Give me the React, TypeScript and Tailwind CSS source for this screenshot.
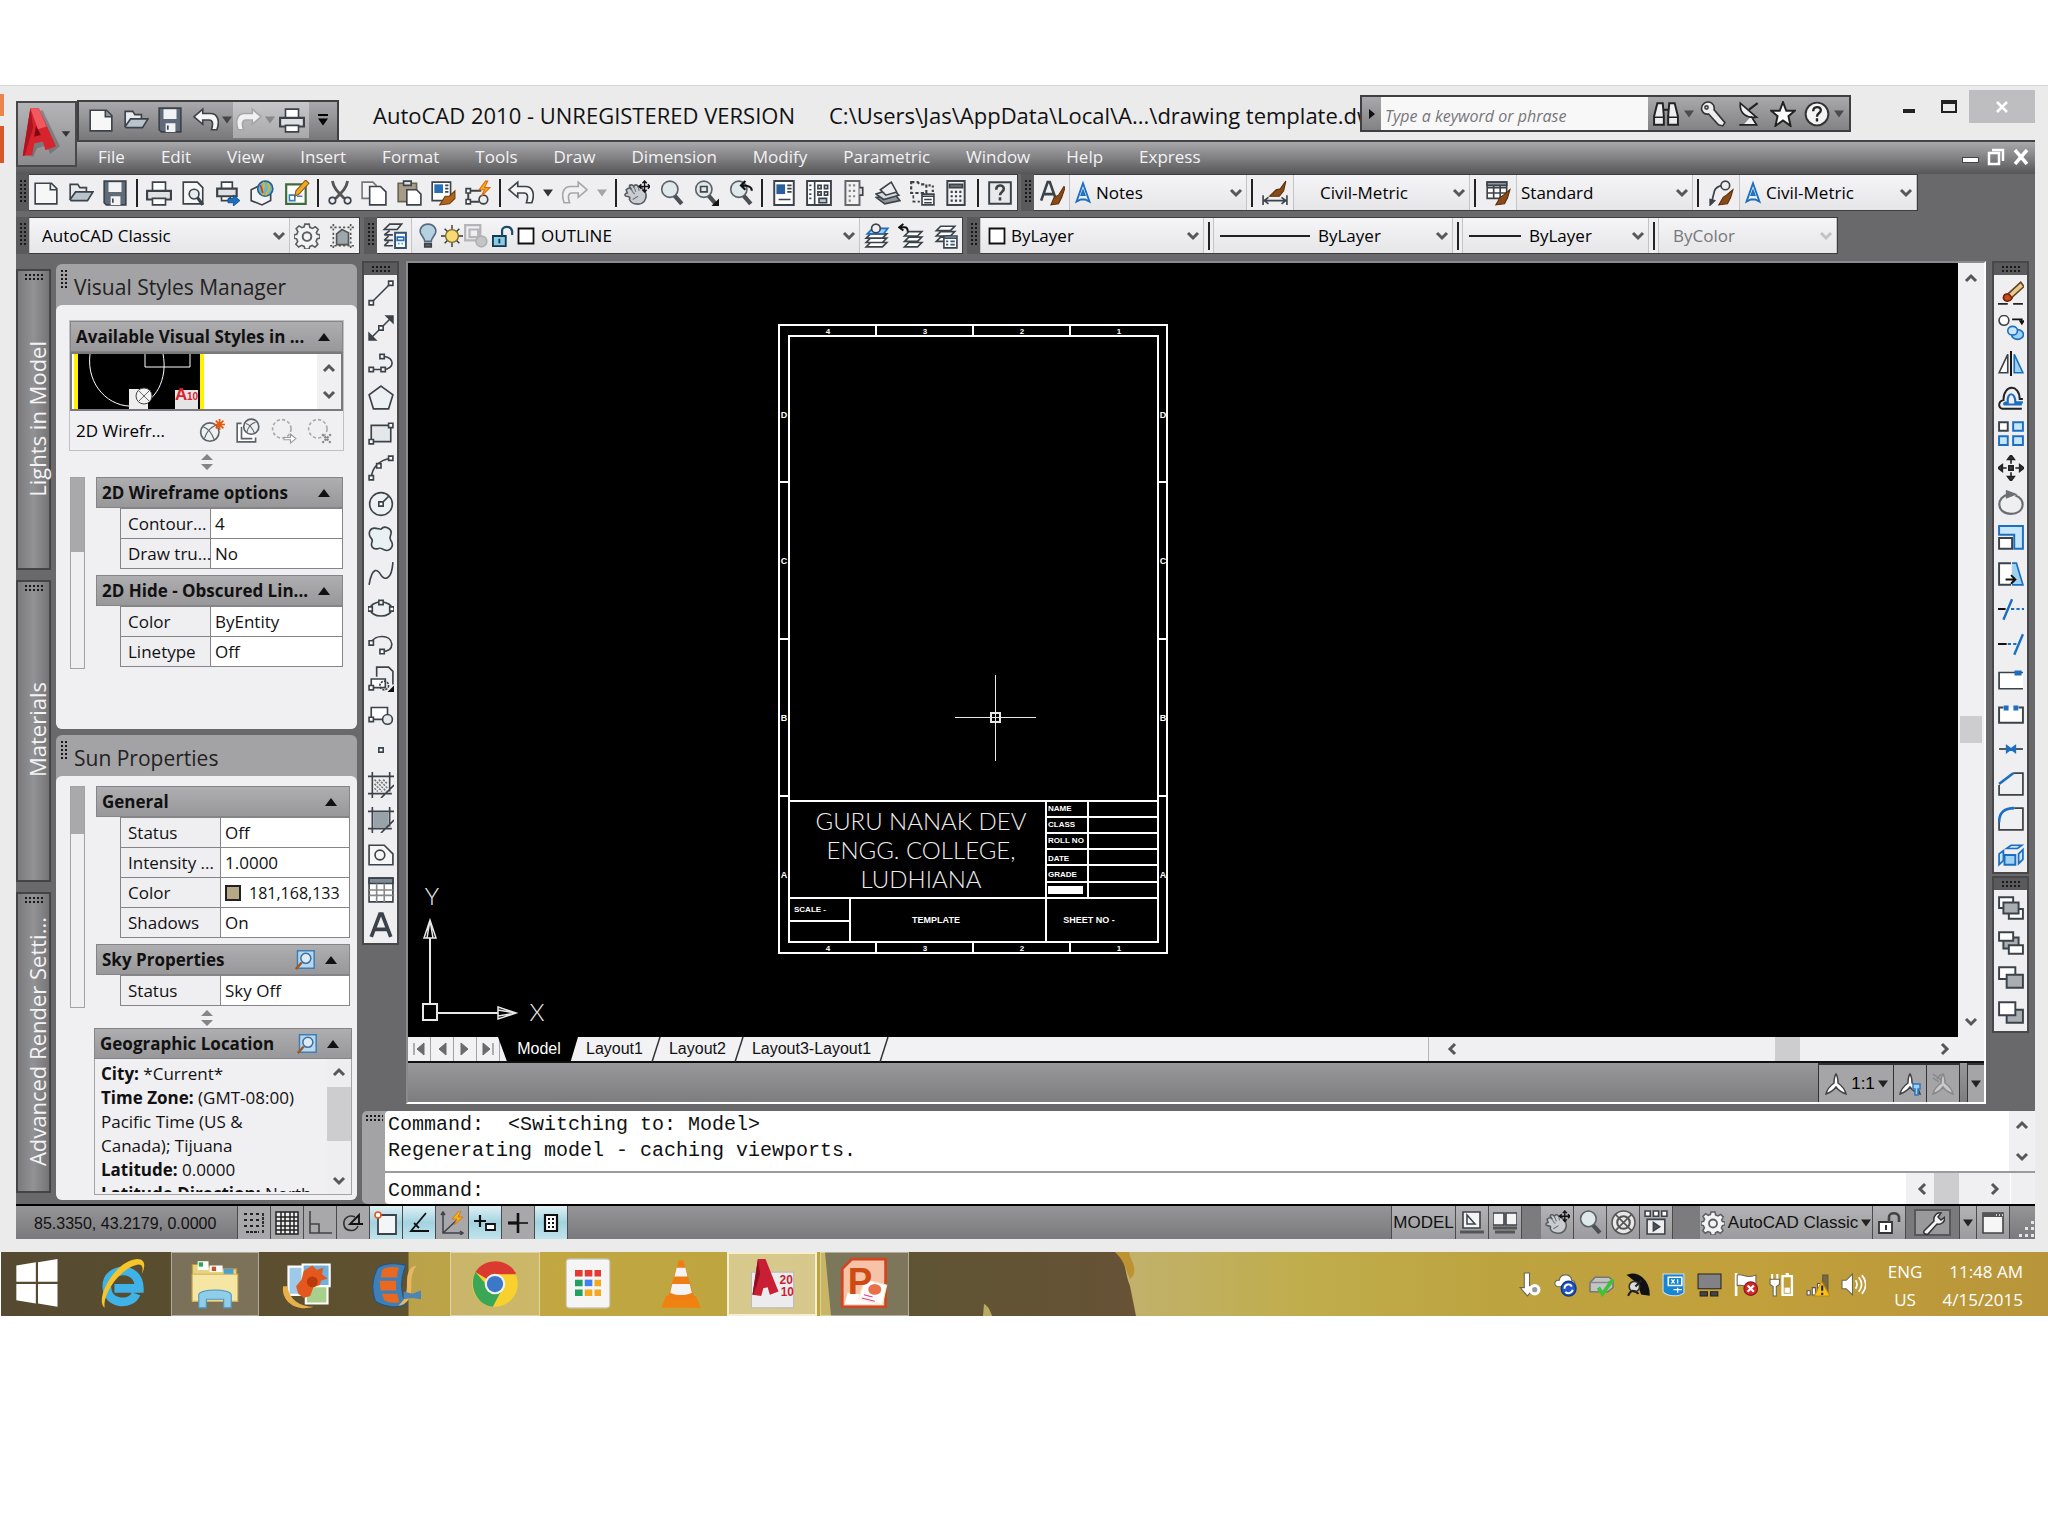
import React from "react";
import type { ReactNode } from "react";

const K = "#3c4249";
const B = "#1c6fc0";

function Svg({ children, className = "size-[26px]" }: { children: ReactNode; className?: string }) {
  return (
    <svg viewBox="0 0 24 24" className={"shrink-0 " + className} fill="none" stroke={K} strokeWidth="1.5" aria-hidden="true">
      {children}
    </svg>
  );
}

const handShape = (
  <>
    <path d="M2 9c2-2 4-2 5 0L5 6c0-2 3-2 4 0 1-2 3-2 4 0 2-1 3 0 4 2 3 2 4 6 3 9-1 4-5 6-9 5-3 0-5-2-6-4 1-2 0-3-3-3-2-1-1-3 1-3l-1-3Z" fill="#c9cdd1" stroke="#555c63" />
    <path d="M7 9c1 2 1 3 3 4M9 6l2 5M13 6l1 4M8 18l5-3" stroke="#6b7279" strokeWidth="1" />
    <path d="M19 1v10M14 6h10M17 3l2-2 2 2M17 9l2 2 2-2M16 4l-2 2 2 2M22 4l2 2-2 2" stroke="#111" strokeWidth="1.3" />
  </>
);
const magnifier = (
  <>
    <path d="m14 14 7 8" stroke="#4c4f53" strokeWidth="4" />
    <circle cx="10" cy="8.5" r="7.500" fill="#dfe9ec" stroke="#5b6268" />
  </>
);
const sheets = <path d="M8 3h13l-4 4H4ZM8 8h13l-4 4H4ZM8 13h13l-4 4H4Z" fill="#fff" />;
const globeBall = (
  <>
    <circle cx="10" cy="13" r="8.5" fill="#eef0f2" stroke="#5b6268" />
    <path d="M4 8c5 2 8 6 10 12M15 7C10 9 7 13 5 19" stroke="#5b6268" strokeWidth="1" />
  </>
);
const personShape = "M12 2c-2 3-2 6-2 9-4 3-7 6-8 11 3-1 7-3 10-7 3 4 7 6 10 7-1-5-4-8-8-11 0-3 0-6-2-9Z";

const icons: Record<string, ReactNode> = {
  new: <path d="M2 3h15l5 5v14H2ZM16 3v6h6" fill="#f7f7f8" />,
  open: <><path d="M2 18V4h7l2 3h6v4" fill="#e9eaec" /><path d="M2 18 7 11h16l-5 8H3Z" fill="#b9c3cc" /></>,
  save: <><path d="M2 1h20v22H4l-2-2Z" fill="#5f6b79" /><path d="M6 2h12v9H6ZM8 15h9v8H8Z" fill="#f2f3f4" stroke="none" /><path d="M10 17v4" /></>,
  print: <><path d="M6 10V2h12v8" fill="#fff" /><path d="M1 10h22v8H1Z" fill="#dfe1e3" strokeWidth="2" /><path d="M6 17h12v6H6Z" fill="#fff" /></>,
  preview: <><path d="M3 2h13l5 5v15H3Z" fill="#f7f7f8" /><circle cx="13" cy="13" r="4.5" fill="#e6edf0" /><path d="m16 16 5 7" strokeWidth="3" /></>,
  publish: <><path d="M6 8V2h10v6M6 14v5h8v-5" fill="#fff" /><path d="M2 8h18v7H2Z" fill="#dfe1e3" strokeWidth="2" /><path d="M12 17h5v-3l6 5-6 5v-3h-5Z" fill={B} stroke="#0c4c90" strokeWidth=".8" /></>,
  globe: <><path d="m2 9 8-4 10 5v9l-8 4-10-4Z" fill="#f3f4f5" /><circle cx="15" cy="8" r="7" fill="#5fb8dd" stroke="#27618c" /><path d="M13 2c3 3-2 6 0 12M17 3c3 4 2 7-2 11" stroke="#e3b02c" strokeWidth="2" /><path d="M10 5c3 2 1 5 3 7" stroke="#c0392b" /></>,
  markup: <><path d="M2 4h18v18H2Z" fill="#fff" stroke="#3f6a3c" strokeWidth="2" /><path d="M5 14h5v5H5ZM12 15h5" stroke="#3a7fb8" /><path d="m10 15 1-5L20 0l3 3-9 10Z" fill="#f0a928" stroke="#8f5712" strokeWidth="1" /></>,
  cut: <><path d="M5 1c1 6 4 9 11 16M19 1c-1 6-4 9-11 16" stroke="#555" strokeWidth="2.6" /><circle cx="5" cy="19" r="3" /><circle cx="19" cy="19" r="3" /></>,
  copy: <><path d="M1 2h10l3 3v12H1Z" fill="#f4f4f5" stroke="#777" /><path d="M8 6h10l5 5v12H8Z" fill="#fff" /></>,
  paste: <><path d="M2 3h17v17H2Z" fill="#a59b86" stroke="#6b6452" /><path d="M7 1h7v4H7Z" fill="#ddd" /><path d="M10 9h9l4 4v10H10Z" fill="#fff" /></>,
  match: <><path d="M2 2h17v17H2Z" fill="#fff" /><path d="M4 4h8v8H4Z" fill="#2a6fb5" stroke="none" /><path d="M14 5h3M14 8h3M14 11h3" /><path d="m23 10-5 5-4 0-5 8 9-1 5-5Z" fill="#b3641d" stroke="#6b390b" strokeWidth="1" /></>,
  block: <><path d="M3 10h12M3 20h10M3 10v10" strokeWidth="1.8" /><circle cx="17" cy="18" r="4" fill="#eee" /><path d="M1 8h4v4H1ZM1 18h4v4H1Z" fill="#fff" /><path d="m19 1-6 8h5l-3 6 8-8h-5l3-6Z" fill="#f6b21b" stroke="#dd6a10" strokeWidth="1" /></>,
  undo: <path d="M9 2 1 9l8 7v-4h6c3 0 4 3 2 9h5c3-8 1-15-6-15H9Z" fill="#f6f6f7" />,
  redo: <path d="m15 2 8 7-8 7v-4H9c-3 0-4 3-2 9H2C-1 13 1 6 8 6h7Z" fill="#f1f1f2" stroke="#a6a6a8" />,
  pan: handShape,
  zoom: magnifier,
  zoomwin: <>{magnifier}<path d="M7 6h6v5H7Z" stroke="#444" /><path d="m24 24-7 0 7-7Z" fill="#111" stroke="none" /></>,
  zoomprev: <>{magnifier}<path d="M22 10c0-4-3-5-9-5M16 1l-4 4 4 4" stroke="#111" strokeWidth="2" /></>,
  props: <><path d="M3 1h18v22H3Z" fill="#fff" strokeWidth="1.8" /><path d="M5 4h8v9H5Z" fill="#2a5f9e" stroke="none" /><path d="M15 5h4M15 8h4M15 11h4M7 18h11" /></>,
  center: <><path d="M1 1h22v22H1Z" fill="#fff" strokeWidth="1.8" /><path d="M8 1v22M3 5h2M3 9h2M3 13h2M3 17h2M11 5h3v3h-3ZM17 5h3v3h-3ZM11 11h3v3h-3ZM17 11h3v3h-3Z" /><path d="M12 17h7v4h-7Z" fill="#b9c7d3" /></>,
  palettes: <><path d="M5 1h13v22H5Z" fill="#f2f2f3" stroke="#666" strokeWidth="1.8" /><path d="M8 5h2M12 5h2M8 10h2M12 10h2M8 15h2M12 15h2M8 19h2" strokeWidth="2" stroke="#888" /><path d="M18 7h3v7h-3" fill="#ddd" /></>,
  sheetset: <><path d="m1 16 8 6 14-3-4-5Z" fill="#8d959c" /><path d="m1 13 7 5 14-4-6-6Z" fill="#d7dade" /><path d="M5 9 15 2l5 9-10 3Z" fill="#eee" /></>,
  markupset: <><path d="M2 2h6l2 2h6v8H2Z" strokeDasharray="3 2" strokeWidth="2" /><path d="M4 14v6h6" strokeDasharray="3 2" /><path d="M18 5h4v8" strokeDasharray="2 2" strokeWidth="2" /><path d="M12 13h11v10H12Z" fill="#fff" /><path d="M12 15h11M14 18h7M14 21h7" /></>,
  calc: <><path d="M4 1h16v22H4Z" fill="#f2f2f3" strokeWidth="1.8" /><path d="M6 4h12v3H6Z" fill="#777" /><path d="M7 11h2M11 11h2M15 11h2M7 15h2M11 15h2M15 15h2M7 19h2M11 19h2M15 19h2" strokeWidth="2" /></>,
  help: <><path d="M2 2h20v20H2Z" fill="#e8e9eb" strokeWidth="1.8" /><path d="M8.500 9c0-5 7-5 7-1 0 3-3.500 3-3.500 6M12 16v3" strokeWidth="2.400" /></>,
  textstyle: <><path d="M2 19 8 2h2l6 17M4 13h9" strokeWidth="2.400" /><path d="m23 6-5 8-4 2-3 7 7-1 3-6 3-9Z" fill="#8a4b18" stroke="#5c2e08" strokeWidth="1" /></>,
  dimstyle: <><path d="M1 14v9M23 14v9M2 19h20M6 16l-4 3 4 3M18 16l4 3-4 3" /><path d="m22 1-5 7-4 1-6 6 9 0 4-5Z" fill="#8a4b18" stroke="#5c2e08" strokeWidth="1" /></>,
  tablestyle: <><path d="M2 2h18v15H2ZM2 7h18M2 12h18M8 5v12M14 5v12" fill="#fff" /><path d="M2 2h18v3H2Z" fill="#8a97a3" /><path d="m23 9-6 5-3 2-4 7 8-1 3-6Z" fill="#8a4b18" stroke="#5c2e08" strokeWidth="1" /></>,
  mleader: <><path d="M3 22 6 10c1-3 3-4 7-5" strokeWidth="1.600" /><circle cx="16" cy="5" r="4" fill="#eee" /><path d="m2 23 0-5 4 1Z" fill={K} /><path d="m23 9-6 5-3 2-4 7 8-1 3-6Z" fill="#8a4b18" stroke="#5c2e08" strokeWidth="1" /></>,
  compass: <path d="m12 3 6 17-4-2h-4l-4 2ZM12 10l1.500 4h-3Z" stroke={B} strokeWidth="1.700" fill="#e8f1fa" />,
  gear: <><path d="M10 1h4l.6 3 2.400 1 2.700-1.600 2.600 2.600L20.600 9l.8 1.500 2.600.5v3l-2.600.6-1 2.400 1.600 2.700-2.600 2.600-2.700-1.600-2.200 1L14 24h-4l-.6-2.400-2.400-1-2.700 1.600-2.600-2.600L3.400 17l-1-2.400L0 14v-3l2.600-.6 1-2.400L2 5.300 4.600 2.700l2.700 1.600 2.100-.8Z" fill="#f4f4f5" stroke="#5a5f65" /><circle cx="12" cy="12.500" r="4" stroke="#5a5f65" strokeWidth="1.800" /></>,
  wspace: <><path d="M1 4h22M1 21h22M4 1v23M20 1v23" stroke="#555" strokeDasharray="2 2" /><path d="M7 20V10l5-4 6 3v11Z" fill="#9fa7ae" stroke="#555" /></>,
  layerprops: <><path d="M8 1h11l-4 5H3ZM3 11h8M8 7l-5 4M3 16h8M7 12l-4 4M3 21h8M7 17l-4 4" /><path d="M13 9h10v14H13Z" fill="#fff" stroke="#33536f" strokeWidth="1.800" /><path d="M15 13h6v3h-6ZM16 19h1M19 19h1" stroke={B} /></>,
  bulb: <><path d="M12 1c-5 0-8 4-7 8 1 3 4 5 4 8h6c0-3 3-5 4-8 1-4-2-8-7-8Z" fill="#b5d0e2" stroke="#54687a" /><path d="M9 19h6v3H9Z" fill="#666" /></>,
  sun: <><path d="M12 0v24M0 12h24M4 4l16 16M20 4 4 20" stroke="#333" /><circle cx="12" cy="12" r="7" fill="#f8da73" stroke="#7d6a2c" /></>,
  freeze: <><path d="M2 2h14v14H2ZM6 6h8v7H6Z" stroke="#b5b5b8" strokeWidth="2" /><circle cx="17" cy="17" r="5" fill="#c4c4c7" stroke="#b0b0b3" /></>,
  lock: <><path d="M1 12h14v11H1Z" fill="#8bcbe6" stroke="#12394f" strokeWidth="2" /><path d="M11 12V6c0-5 10-6 11 1v4" stroke="#1b4d68" strokeWidth="2.400" /><path d="M8 15v5" stroke="#12394f" strokeWidth="2" /></>,
  swatch: <path d="M2 2h20v20H2Z" fill="#fff" stroke="#111" strokeWidth="2.400" />,
  makecur: <><path d="M6 10h15l-4 4H2ZM6 14h15l-4 4H2ZM6 18h15l-4 4H2Z" fill="#fff" /><path d="M8 5h14l-4 5H3Z" fill="#9fd0ee" stroke={B} /><circle cx="11" cy="5" r="4" fill="#eee" /></>,
  layerprev: <><path d="M10 8h12l-4 4H6ZM10 13h12l-4 4H6ZM10 18h12l-4 4H6Z" fill="#fff" /><path d="M1 4h5c3 0 3 2 3 4M5 1 1 4l4 3" stroke="#111" strokeWidth="1.800" /></>,
  layerstate: <>{sheets}<path d="M11 12h12v11H11Z" fill="#fff" /><path d="M11 14h12M13 17h2M17 17h4M13 20h2M17 20h4" stroke="#33536f" /></>,
  line: <><path d="M3 21 21 3" /><path d="M1 19h4v4H1ZM19 1h4v4h-4Z" fill="#fff" /></>,
  xline: <><path d="M3 21 21 3" /><path d="m1 23 0-6 6 6ZM23 1v6l-6-6Z" fill={K} /><path d="M10 10h4v4h-4Z" fill="#fff" /></>,
  pline: <><path d="M3 18h11c11 0 11-12 0-12" /><path d="M1 16h4v4H1ZM12 16h4v4h-4ZM11 4h4v4h-4Z" fill="#fff" /></>,
  polygon: <path d="m12 1 11 8-4 13H5L1 9Z" fill="#eef1f3" />,
  rect: <><path d="M3 5h18v15H3Z" fill="#e4e8ea" /><path d="M1 18h4v4H1ZM19 3h4v4h-4Z" fill="#fff" /></>,
  arc: <><path d="M3 21C4 11 10 5 21 3" /><path d="M1 19h4v4H1ZM8 8h4v4H8ZM19 1h4v4h-4Z" fill="#fff" /></>,
  circle: <><circle cx="12" cy="12" r="10.500" fill="#eef1f3" /><path d="m12 12 7-7" /><path d="M10 10h4v4h-4Z" fill="#fff" /></>,
  cloud: <path d="M12 3c3-4 11-1 9 5-1 3-1 4 1 7 2 5-3 9-7 7-3-2-4-2-6-1-5 1-7-3-5-7 0-1 0-2-2-4-2-4 0-8 4-8 3 0 4 1 6 1Z" fill="#e9f1f2" />,
  spline: <path d="M1 22c3-18 8-14 11-9s10 5 11-12" />,
  ellipse: <><ellipse cx="12" cy="12" rx="10" ry="6.500" fill="#eef1f3" /><path d="M0 10h4v4H0ZM20 10h4v4h-4ZM10 4h4v4h-4Z" fill="#fff" /></>,
  elarc: <><path d="M3 11C6 3 21 3 22 12c0 5-4 7-9 7" /><path d="M1 9h4v4H1ZM11 17h4v4h-4Z" fill="#fff" /></>,
  insert: <><path d="M8 10V1h11l4 4v12" /><path d="M3 12h13v8H3Z" fill="#fff" /><path d="M1 18h4v4H1Z" fill="#fff" /><circle cx="15" cy="18" r="4" strokeDasharray="2 1" /><path d="M24 24h-6l6-6Z" fill="#111" stroke="none" /></>,
  mkblock: <><path d="M3 6h15v11H3Z" fill="#fff" /><path d="M1 15h4v4H1Z" fill="#fff" /><circle cx="18" cy="17" r="4.500" fill="#e5e8ea" /></>,
  point: <path d="M10 10h4v4h-4Z" fill="#fff" />,
  hatch: <><path d="M0 4h24M0 20h22M4 0v24M20 0v18M12 24 24 12" /><path d="m6 7 11 11M6 11l7 7M6 15l3 3M10 7l8 8M14 7l4 4" stroke="#777" strokeDasharray="2 1" /></>,
  gradient: <><path d="M5 5h14v14H5Z" fill="#9aa2a9" stroke="none" /><path d="M0 4h24M0 20h22M4 0v24M20 0v18M12 24 24 12" /></>,
  region: <><path d="M1 3h14l8 8v10H1Z" fill="#f6f6f7" /><circle cx="11" cy="12" r="4.500" /></>,
  table: <><path d="M1 1h22v22H1Z" fill="#fff" /><path d="M1 1h22v5H1Z" fill="#7e8b97" /><path d="M1 12h22M1 17h22M8 6v17M15 6v17" stroke="#888" /></>,
  mtext: <path d="M3 23 11 2h2l8 21M6 16h12" strokeWidth="3.400" />,
  erase: <><path d="M0 22h9M14 22h9" stroke="#222" /><path d="m9 13 12-11 3 4-12 11Z" fill="#ecc98c" stroke="#5e4425" /><path d="M5 17c0-4 3-5 6-3l2 3c-2 3-6 4-8 0Z" fill="#cf4a1c" stroke="#702308" /></>,
  cpobj: <><circle cx="5.500" cy="5" r="4.500" fill="#fff" /><path d="M13 4h9v4M20 5l2 3 2-3" stroke="#111" /><ellipse cx="18" cy="18" rx="5.500" ry="4.500" fill="#9ed2f0" stroke={B} /><ellipse cx="13.500" cy="14.500" rx="4.500" ry="4" fill="#c7e6f7" stroke={B} /></>,
  mirror: <><path d="M1 21 9 4v17Z" fill="#fff" /><path d="M12 1v23" stroke="#111" strokeWidth="1.800" /><path d="M23 21 15 4v17Z" fill="#9ed2f0" stroke={B} /></>,
  offset: <><path d="M22 22H4c-4-1-4-7 1-8 0-15 15-15 15-1h3" stroke="#222" strokeWidth="1.800" /><path d="M22 18H6c-1-1 0-2 3-2-1-10 7-10 7 0h7" stroke={B} strokeWidth="2" /></>,
  array: <><path d="M1 2h8v8H1Z" fill="#fff" strokeWidth="1.800" /><path d="M14 2h9v8h-9ZM1 15h8v8H1ZM14 15h9v8h-9Z" fill="#c7e6f7" stroke={B} strokeWidth="1.800" /></>,
  move: <path d="M10 10h4v4h-4ZM12 8V3M12 16v5M8 12H3M16 12h5M9 4l3-4 3 4ZM9 20l3 4 3-4ZM4 9l-4 3 4 3ZM20 9l4 3-4 3Z" fill={K} stroke="#222" />,
  rotate: <><path d="M10 4c-12 2-12 18 2 18 13 0 14-14 4-17" stroke="#6b6f73" strokeWidth="2" /><path d="m8 1 8 3-8 3Z" fill="#6b6f73" stroke="#6b6f73" /></>,
  scale: <><path d="M1 1h22v21H15V9H1Z" fill="#c7e6f7" stroke={B} strokeWidth="1.800" /><path d="M1 12h12v10H1Z" fill="#fff" strokeWidth="1.800" /></>,
  stretch: <><path d="M12 2H1v20h11" fill="#fff" strokeWidth="1.800" /><path d="M13 2h4l6 20H13" fill="#9ed2f0" stroke={B} /><path d="M7 17h8M12 13l4 4-4 4" stroke="#111" strokeWidth="1.800" /></>,
  trim: <><path d="M0 12h7" stroke="#111" strokeWidth="1.800" /><path d="M12 12h12" stroke={B} strokeDasharray="3 2" strokeWidth="1.800" /><path d="M5 22 13 3" stroke={B} strokeWidth="2.200" /></>,
  extend: <><path d="M0 12h8" stroke="#111" strokeWidth="1.800" /><path d="M9 12h8" stroke={B} strokeDasharray="3 2" strokeWidth="1.800" /><path d="M15 22 23 3" stroke={B} strokeWidth="2.200" /></>,
  brkpt: <><path d="M23 6H1v15h22" fill="#fff" strokeWidth="1.600" /><path d="M16 5h5v3h-5Z" fill={B} stroke={B} /></>,
  brk: <><path d="M5 6H1v14h22V6h-4" fill="#fff" strokeWidth="1.800" /><path d="M6 5h3v3H6ZM15 5h3v3h-3Z" fill={B} stroke={B} /></>,
  join: <><path d="M1 12h22" strokeWidth="1.600" /><path d="m8 9 4 3-4 3ZM16 9l-4 3 4 3Z" fill={B} stroke={B} /></>,
  chamfer: <><path d="M1 13v9h22V2H14" fill="#eef0f2" strokeWidth="1.600" /><path d="M1 12 14 2" stroke={B} strokeWidth="2.400" /></>,
  fillet: <><path d="M1 13v9h22V2H15" fill="#eef0f2" strokeWidth="1.600" /><path d="M1 15C1 6 6 2 15 2" stroke={B} strokeWidth="2.400" /></>,
  explode: <><path d="M6 12h10v9H6Z" fill="#9ed2f0" stroke={B} strokeWidth="1.800" /><path d="m1 11 4-3v9l-4 4ZM8 6l4-3h10l-4 3ZM19 11l4-4v9l-4 4Z" fill="#c7e6f7" stroke={B} strokeWidth="1.600" /></>,
  front: <><path d="M1 2h13v10H1ZM10 13h13v9H10Z" fill="#fff" strokeWidth="1.800" /><path d="M5 7h14v10H5Z" fill="#a9aeb3" strokeWidth="1.800" /></>,
  back: <><path d="M5 7h14v10H5Z" fill="#a9aeb3" strokeWidth="1.800" /><path d="M1 2h13v8H1ZM10 14h13v8H10Z" fill="#fff" strokeWidth="1.800" /></>,
  above: <><path d="M1 2h15v11H1Z" fill="#fff" strokeWidth="1.800" /><path d="M8 9h15v12H8Z" fill="#a9aeb3" strokeWidth="1.800" /></>,
  under: <><path d="M8 9h15v12H8Z" fill="#a9aeb3" strokeWidth="1.800" /><path d="M1 2h15v12H1Z" fill="#fff" strokeWidth="1.800" /></>,
  binoc: <><path d="M4 2h5l1 12v8H1v-8ZM15 2h5l3 12v8h-9v-8ZM9 8h6" fill="#eee" stroke="#222" strokeWidth="1.800" /><path d="M1 15h9M14 15h9" stroke="#222" /></>,
  key: <><path d="M4 2c5-3 10 1 9 6l10 12-2 3-4-1-9-10C2 13-1 6 4 2Z" fill="#eee" stroke="#333" /><circle cx="6" cy="6" r="1.500" /></>,
  dish: <><path d="M4 2c-1 10 6 14 15 13ZM7 22h12l-5-8M3 22h14" fill="#f2f2f2" stroke="#222" strokeWidth="1.600" /><path d="m12 8 8-6" stroke="#222" strokeWidth="2" /></>,
  star: <path d="m12 1 3 8h8l-6 5 2 9-7-5-7 5 2-9-6-5h8Z" fill="#fff" stroke="#222" strokeWidth="1.800" />,
  qmark: <><circle cx="12" cy="12" r="10.500" fill="#f4f4f4" stroke="#333" strokeWidth="1.800" /><path d="M8.500 9.500c0-5 7-5 7-1 0 3-3.500 2-3.500 6M12 16v3" stroke="#222" strokeWidth="2.200" /></>,
  vsnew: <>{globeBall}<path d="M19 1v10M14 6h10M15.500 2.500l7 7M22.500 2.500l-7 7" stroke="#e8590c" strokeWidth="1.600" /></>,
  vscopy: <><path d="M6 5H2v17h17v-4M6 8v11h10" fill="#fff" stroke="#5b6268" /><circle cx="15" cy="8" r="7" fill="#eef0f2" stroke="#5b6268" /><path d="M10 5c4 1 6 4 8 9M19 4c-4 1-7 5-8 9" stroke="#5b6268" strokeWidth="1" /></>,
  vsexp: <><circle cx="10" cy="10" r="8.500" stroke="#a9a9ac" strokeDasharray="3 2" /><path d="M12 18h6v-3l5 4-5 4v-3h-6Z" fill="#fff" stroke="#999" strokeWidth="1" /></>,
  vsdel: <><circle cx="10" cy="10" r="8.500" stroke="#a9a9ac" strokeDasharray="3 2" /><path d="m14 15 8 8M22 15l-8 8" stroke="#888" strokeWidth="2" strokeDasharray="2 1" /></>,
  sheetzoom: <><path d="M3 1h20v21H3Z" fill="#b9d7ee" stroke="#3f7db5" strokeWidth="1.800" /><circle cx="13" cy="10" r="6" fill="#dcecf7" stroke="#3d6e99" strokeWidth="1.800" /><path d="m8 15-7 8" stroke="#9a5a26" strokeWidth="3" /></>,
  snap: <path d="M2 3h3M8 3h3M14 3h3M2 9h3M8 9h3M14 9h3M2 15h3M8 15h3M14 15h3M4 21h13M21 2v14M21 19v4" stroke="#222" strokeWidth="1.800" strokeDasharray="3 1" />,
  grid: <path d="M1 1h22v22H1ZM1 6h22M1 10h22M1 15h22M1 19h22M6 1v22M10 1v22M15 1v22M19 1v22" fill="#eee" stroke="#222" />,
  ortho: <path d="M2 0v22h22M2 13h9v9" stroke="#444" strokeWidth="1.600" />,
  polar: <><path d="M14 6C7 3 2 8 3 14s11 8 14 1" stroke="#333" strokeWidth="1.600" /><path d="M22 13H9L18 4v9" stroke="#111" strokeWidth="1.800" /></>,
  osnap: <><path d="M4 4h18v19H4Z" fill="#f3f5f7" strokeWidth="1.800" /><circle cx="4" cy="4" r="3" fill="#fff" stroke="#e2571b" strokeWidth="1.600" /></>,
  otrack: <path d="M19 2 4 20h18M7 12l5 5" stroke="#111" strokeWidth="1.800" />,
  ducs: <><path d="M3 2v20h20M3 22 18 8M1 4l2-3 2 3M20 20l3 2-3 2" /><path d="m19 0-7 8h5l-3 6 9-8h-5l3-6Z" fill="#f7b51c" stroke="#d77b14" strokeWidth="1" /></>,
  dyn: <><path d="M7 4v12M1 10h12" stroke="#111" strokeWidth="2.200" /><path d="M13 13h9v6h-9Z" fill="#fff" stroke="#111" strokeWidth="1.800" /></>,
  lwt: <><path d="M12 2v20" stroke="#111" strokeWidth="2.600" /><path d="M2 12h10" stroke="#111" strokeWidth="3.200" /><path d="M12 12h10" stroke="#111" strokeWidth="1.600" /></>,
  qp: <><path d="M6 4h12v16H6Z" fill="#fff" stroke="#111" strokeWidth="2.200" /><path d="M9 8h2M13 8h2M9 12h2M13 12h2M9 16h2M13 16h2" stroke="#111" strokeWidth="1.800" /></>,
  modelsp: <><path d="M3 1h17v16H3Z" fill="#f4f4f4" strokeWidth="1.600" /><path d="M7 4v9h8Z" /><path d="M0 21h24" strokeWidth="3" stroke="#555" /></>,
  qvlay: <><path d="M0 2h11v12H0ZM13 2h11v12H13Z" fill="#f4f4f4" strokeWidth="1.600" /><path d="M0 17h24M2 21h20" strokeWidth="3" stroke="#555" /></>,
  wheel: <><circle cx="12" cy="12" r="11" fill="#e8e8e8" stroke="#555" /><circle cx="12" cy="12" r="6" stroke="#555" strokeWidth="2" /><path d="m4 4 16 16M20 4 4 20" stroke="#555" /></>,
  motion: <><path d="M1 1h5v5H1ZM9 1h5v5H9ZM17 1h5v5h-5Z" fill="#fff" /><path d="M3 9h17v14H3Z" fill="#eee" /><path d="m9 12 6 4-6 4Z" fill="#555" /></>,
  unlock: <><path d="M2 11h13v11H2Z" fill="#fff" stroke="#333" strokeWidth="1.800" /><path d="M12 11V6c0-5 9-5 10 0v5" stroke="#444" strokeWidth="2.600" /><path d="M9 14v5" stroke="#333" strokeWidth="2" /></>,
  wrench: <path d="M3 20 13 10c-1-5 3-9 7-8l-3 4 3 3 4-3c0 5-4 8-8 7L7 23c-3 1-5-1-4-3Z" fill="#f4f4f4" stroke="#333" />,
  clean: <><path d="M2 2h20v20H2Z" fill="#f6f6f6" stroke="#444" strokeWidth="1.600" /><path d="M2 4h20" stroke="#555" strokeWidth="4" /><path d="M15 4h1M18 4h1M21 4h1" stroke="#fff" strokeWidth="1.600" /></>,
  anno: <path d={personShape} fill="#fff" stroke="#444" />,
  annovis: <><path d={personShape} fill="#fff" stroke="#444" /><path d="M15 12h7v5h-2v6h-3v-6h-2Z" fill="#9fd0f5" stroke="#2e77c4" /></>,
  annoauto: <><path d={personShape} fill="#c9c9cb" stroke="#88888b" /><path d="M2 2l8 6M2 6l6 4M10 2l-4 5" stroke="#88888b" /></>,
};

function Icon({ name, className }: { name: string; className?: string }) {
  return <Svg className={className}>{icons[name]}</Svg>;
}

function Tri({ className = "text-[#222]" }: { className?: string }) {
  return (
    <svg viewBox="0 0 10 7" className={"h-[8px] w-[10px] shrink-0 " + className} aria-hidden="true">
      <path d="M0 0h10L5 7Z" fill="currentColor" />
    </svg>
  );
}

function Chevron({ dir = "down", className = "text-[#57565a]" }: { dir?: "down" | "up" | "left" | "right"; className?: string }) {
  const d = { down: "M2 4l5 5 5-5", up: "M2 10l5-5 5 5", left: "M10 2L5 7l5 5", right: "M4 2l5 5-5 5" }[dir];
  return (
    <svg viewBox="0 0 14 14" className={"size-[14px] shrink-0 " + className} aria-hidden="true">
      <path d={d} fill="none" stroke="currentColor" strokeWidth="3" />
    </svg>
  );
}

const dots = "bg-[radial-gradient(#18181a_1px,transparent_1px)] bg-[size:4px_4px]";

function Grip() {
  return (
    <div className="flex w-[13px] shrink-0 justify-center bg-[#5a595c] pt-[5px]">
      <div className={"h-[24px] w-[8px] " + dots} />
    </div>
  );
}

function Bar({ children, className = "" }: { children: ReactNode; className?: string }) {
  return <div className={"flex h-[37px] items-stretch border-y border-r border-[#3d3c3f] bg-[#efeef1] " + className}>{children}</div>;
}

function Sep() {
  return (
    <div className="flex w-[9px] shrink-0 items-center justify-center">
      <div className="h-[28px] w-[2px] bg-[#222]" />
    </div>
  );
}

function Tool({ name, className = "flex-1" }: { name: string; className?: string }) {
  return (
    <button aria-label={name} className={"flex min-w-0 items-center justify-center " + className}>
      <Icon name={name} />
    </button>
  );
}

function Combo({ label, value, lead, className = "", disabled = false }: { label: string; value: string; lead?: ReactNode; className?: string; disabled?: boolean }) {
  return (
    <div className={"relative flex items-center border-x border-[#c4c3c6] bg-[linear-gradient(#f5f4f7,#e6e5e8)] " + className}>
      {lead}
      <select
        aria-label={label}
        disabled={disabled}
        className={"h-full min-w-0 flex-1 appearance-none bg-transparent text-[17px] outline-none " + (disabled ? "text-[#77767a]" : "text-black")}
      >
        <option>{value}</option>
      </select>
      <span className="pointer-events-none absolute right-[3px]">
        <Chevron className={disabled ? "text-[#c2c1c4]" : "text-[#57565a]"} />
      </span>
    </div>
  );
}

const std1 = ["new", "open", "save", "|", "print", "preview", "publish", "globe", "markup", "|", "cut", "copy", "paste", "match", "block", "|", "undo", "v", "redo", "w", "|", "pan", "zoom", "zoomwin", "zoomprev", "|", "props", "center", "palettes", "sheetset", "markupset", "calc", "|", "help"];

function Header() {
  return (
    <header className="relative">
      <div className="flex h-[54px] items-start bg-[#ebebec]">
        <div className="ml-[61px] mt-[14px] flex h-[40px] w-[262px] items-center border-2 border-b-0 border-[#3f3f41] bg-[linear-gradient(#a9a8ab,#78777a)] pb-[2px]">
          <Tool name="new" className="w-[44px]" />
          <Tool name="open" className="w-[26px]" />
          <Tool name="save" className="w-[42px]" />
          <Tool name="undo" className="w-[30px]" />
          <span className="flex w-[12px] justify-center"><Tri className="text-[#444]" /></span>
          <div className="flex h-full w-[76px] items-center bg-white/35">
            <Tool name="redo" className="w-[34px]" />
            <Tri className="text-[#88878a]" />
            <Tool name="print" className="w-[36px]" />
          </div>
          <button aria-label="Customize" className="flex flex-1 flex-col items-center gap-[2px]">
            <span className="h-[2px] w-[10px] bg-black" />
            <Tri className="text-black" />
          </button>
        </div>
        <div className="flex min-w-0 flex-1 items-center overflow-hidden whitespace-pre pl-[34px] pt-[14px] text-[22px] leading-[30px] text-[#111]">
          <span className="w-[456px] shrink-0">AutoCAD 2010 - UNREGISTERED VERSION</span>
          <span>C:\Users\Jas\AppData\Local\A...\drawing template.dw</span>
        </div>
        <div className="mt-[9px] flex h-[37px] w-[491px] shrink-0 items-center border-2 border-[#3f3f41] bg-[linear-gradient(#a9a8ab,#828184)]">
          <button aria-label="Expand search" className="flex w-[19px] justify-center">
            <svg viewBox="0 0 6 10" className="h-[10px] w-[6px]"><path d="M0 0v10l6-5Z" fill="#111" /></svg>
          </button>
          <input
            aria-label="Search"
            placeholder="Type a keyword or phrase"
            className="h-full w-[267px] bg-[#f8f8f9] px-[4px] pt-[5px] text-[16px] italic outline-none placeholder:text-[#77767a]"
          />
          <Tool name="binoc" className="w-[36px]" />
          <Tri className="text-[#4b4b4e]" />
          <Tool name="key" className="w-[38px]" />
          <Tool name="dish" className="w-[34px]" />
          <Tool name="star" className="w-[34px]" />
          <Tool name="qmark" className="w-[34px]" />
          <Tri className="text-[#4b4b4e]" />
        </div>
        <div className="flex w-[184px] shrink-0 items-start justify-end text-[#222]">
          <button aria-label="Minimize" className="flex h-[32px] w-[40px] items-end justify-center pb-[5px]"><span className="h-[4px] w-[12px] bg-[#222]" /></button>
          <button aria-label="Maximize" className="flex h-[32px] w-[40px] items-center justify-center pt-[8px]"><span className="h-[13px] w-[16px] border-2 border-t-4 border-[#222]" /></button>
          <button aria-label="Close" className="mt-[4px] flex h-[33px] w-[66px] items-center justify-center bg-[#bebec0]">
            <svg viewBox="0 0 12 12" className="size-[12px]"><path d="m1 1 10 10M11 1 1 11" stroke="#fff" strokeWidth="2.500" /></svg>
          </button>
        </div>
      </div>
      <nav className="flex h-[34px] items-center border-t-2 border-[#444346] bg-[linear-gradient(#a9a8ab,#858487_45%,#565558)] pb-[2px] pl-[64px] text-[17px] text-[#f2f2f3]">
        <div className="flex">
          {["File", "Edit", "View", "Insert", "Format", "Tools", "Draw", "Dimension", "Modify", "Parametric", "Window", "Help", "Express"].map((m) => (
            <button key={m} className="px-[18px]">{m}</button>
          ))}
        </div>
        <div className="ml-auto flex items-center gap-[8px] pr-[6px]">
          <button aria-label="Minimize drawing" className="pt-[6px]"><span className="block h-[6px] w-[17px] border border-[#444] bg-white" /></button>
          <button aria-label="Restore drawing">
            <svg viewBox="0 0 18 18" className="size-[18px]"><path d="M5 2h11v11M2 5h10v11H2Z" fill="none" stroke="#fff" strokeWidth="2.500" /></svg>
          </button>
          <button aria-label="Close drawing">
            <svg viewBox="0 0 16 16" className="size-[16px]"><path d="m2 1 12 14M14 1 2 15" stroke="#fff" strokeWidth="3.500" /></svg>
          </button>
        </div>
      </nav>
      <button aria-label="Application menu" className="absolute left-0 top-[15px] flex h-[66px] w-[61px] items-center border-2 border-[#48474a] bg-[linear-gradient(#b5b4b7,#8c8b8e)]">
        <svg viewBox="0 0 60 62" className="h-[62px] w-[57px]" aria-hidden="true">
          <path d="M13 8 26 6l18 38-10 8-4-9-10 3-4 9-9-2Z" fill="#4a4a4c" opacity=".4" />
          <path d="m13 4 9 0 18 40-11 4-3-9-9 2-2 12-10 1Z" fill="#d7232e" />
          <path d="m13 4 3 20-9 30-2 0Z" fill="#b01320" />
          <path d="m19 22 5 10-7 2Z" fill="#7c0a12" />
          <path d="m13 4 9 0 8 19-9 3Z" fill="#ee5a5f" />
          <path d="M46 28h9l-4.500 6Z" fill="#333" />
        </svg>
      </button>
    </header>
  );
}

function Toolbars() {
  return (
    <div>
      <div className="flex">
        <Grip />
        <Bar className="w-[989px] shrink-0">
          {std1.map((n, i) =>
            n === "|" ? <Sep key={i} /> : n === "v" || n === "w" ? (
              <span key={i} className="flex w-[19px] items-center justify-center"><Tri className={n === "v" ? "text-[#333]" : "text-[#a5a5a8]"} /></span>
            ) : <Tool key={i} name={n} />
          )}
        </Bar>
        <div className="w-[3px]" />
        <Grip />
        <Bar className="w-[884px]">
          <Tool name="textstyle" className="w-[35px] shrink-0" />
          <Combo label="Text style" value="Notes" className="w-[178px] shrink-0" lead={<Icon name="compass" />} />
          <Sep />
          <Tool name="dimstyle" className="w-[37px] shrink-0" />
          <Combo label="Dimension style" value="Civil-Metric" className="w-[177px] shrink-0 pl-[26px]" />
          <Sep />
          <Tool name="tablestyle" className="w-[37px] shrink-0" />
          <Combo label="Table style" value="Standard" className="w-[177px] shrink-0 pl-[4px]" />
          <Sep />
          <Tool name="mleader" className="w-[37px] shrink-0" />
          <Combo label="Multileader style" value="Civil-Metric" className="flex-1" lead={<Icon name="compass" />} />
        </Bar>
      </div>
      <div className="mt-[6px] flex">
        <Grip />
        <Bar className="w-[331px]">
          <Combo label="Workspace" value="AutoCAD Classic" className="w-[261px] pl-[12px]" />
          <Tool name="gear" />
          <Tool name="wspace" />
        </Bar>
        <div className="w-[4px]" />
        <Grip />
        <Bar className="w-[586px]">
          <Tool name="layerprops" className="w-[34px]" />
          <Combo
            label="Layer"
            value="OUTLINE"
            className="w-[449px] pl-[3px]"
            lead={
              <>
                <Icon name="bulb" />
                <Icon name="sun" className="size-[22px]" />
                <Icon name="freeze" />
                <span className="flex w-[28px] justify-center"><Icon name="lock" className="size-[22px]" /></span>
                <span className="mr-[6px]"><Icon name="swatch" className="size-[18px]" /></span>
              </>
            }
          />
          <Tool name="makecur" />
          <Tool name="layerprev" />
          <Tool name="layerstate" />
        </Bar>
        <div className="w-[4px]" />
        <Grip />
        <Bar className="w-[858px]">
          <Combo label="Color" value="ByLayer" className="w-[224px] pl-[7px]" lead={<span className="mr-[5px]"><Icon name="swatch" className="size-[18px]" /></span>} />
          <Sep />
          <Combo label="Linetype" value="ByLayer" className="w-[240px] pl-[6px]" lead={<span className="mr-[8px] h-[2px] w-[90px] bg-[#222]" />} />
          <Sep />
          <Combo label="Lineweight" value="ByLayer" className="w-[187px] pl-[6px]" lead={<span className="mr-[8px] h-[2px] w-[52px] bg-[#222]" />} />
          <Sep />
          <Combo label="Plot style" value="ByColor" className="flex-1 pl-[14px]" disabled />
        </Bar>
      </div>
    </div>
  );
}

function DockTab({ text }: { text: string }) {
  return (
    <button className="flex min-h-0 flex-1 flex-col items-center border-2 border-[#444346] bg-[linear-gradient(90deg,#7b7a7d,#929194_50%,#757477)]">
      <span className={"mt-[2px] h-[8px] w-[20px] shrink-0 " + dots} />
      <span className="flex min-h-0 flex-1 items-center pb-[12px] pl-[6px]">
        <span className="rotate-180 whitespace-nowrap text-[22px] leading-[26px] text-[#f3f3f4] [writing-mode:vertical-rl]">{text}</span>
      </span>
    </button>
  );
}

function GroupHead({ text, zoom = false }: { text: string; zoom?: boolean }) {
  return (
    <div className="flex h-[31px] items-center border border-[#858487] bg-[linear-gradient(#aeadb0,#98979a)] pl-[5px] pr-[12px] text-[17px] font-bold text-[#111]">
      <span className="min-w-0 flex-1 whitespace-nowrap">{text}</span>
      {zoom && <span className="mr-[10px]"><Icon name="sheetzoom" className="size-[20px]" /></span>}
      <button aria-label={"Collapse " + text}>
        <svg viewBox="0 0 12 8" className="h-[8px] w-[12px]"><path d="M6 0 12 8H0Z" fill="#111" /></svg>
      </button>
    </div>
  );
}

function Props({ rows, wide = false }: { rows: [string, ReactNode][]; wide?: boolean }) {
  return (
    <div className="pl-[24px]">
      <table className="w-full table-fixed border-collapse text-[17px] leading-[22px] text-[#111]">
        <tbody>
          {rows.map(([a, b]) => (
            <tr key={a} className="h-[30px]">
              <th scope="row" className={"whitespace-nowrap border border-[#858487] bg-[#efeef1] pl-[7px] text-left font-normal " + (wide ? "w-[100px]" : "w-[90px]")}>{a}</th>
              <td className="whitespace-nowrap border border-[#858487] bg-white pl-[4px]">{b}</td>
            </tr>
          ))}
        </tbody>
      </table>
    </div>
  );
}

function Palette({ title, children, className }: { title: string; children: ReactNode; className: string }) {
  return (
    <section className={"flex flex-col rounded-[6px] bg-[#a3a2a5] " + className}>
      <div className="flex h-[41px] shrink-0 pl-[4px]">
        <span className={"mt-[5px] h-[20px] w-[8px] " + dots} />
        <h2 className="pl-[6px] text-[21px] leading-[46px] text-[#222]">{title}</h2>
      </div>
      <div className="flex min-h-0 flex-1 flex-col rounded-[6px] bg-[#f0eff2]">{children}</div>
    </section>
  );
}

function Splitter() {
  return (
    <svg viewBox="0 0 12 16" className="h-[16px] w-[12px]" aria-hidden="true"><path d="M6 0 12 6H0ZM0 10h12L6 16Z" fill="#858487" /></svg>
  );
}

function LeftDock() {
  return (
    <aside className="flex w-[341px] shrink-0">
      <div className="flex w-[35px] flex-col gap-[10px] pb-[11px] pt-[8px]">
        <DockTab text="Lights in Model" />
        <DockTab text="Materials" />
        <DockTab text="Advanced Render Setti..." />
      </div>
      <div className="ml-[5px] flex w-[301px] flex-col gap-[6px] pt-[3px]">
        <Palette title="Visual Styles Manager" className="h-[465px]">
          <div className="mx-[13px] mt-[15px] border border-[#c0bfc2]">
            <GroupHead text="Available Visual Styles in ..." />
            <div className="flex h-[59px] border-2 border-[#7a797c] bg-white">
              <svg viewBox="0 0 132 55" className="h-[55px] w-[132px]" aria-hidden="true">
                <path d="M2 0h130v55H2Z" fill="#fff200" />
                <path d="M6 0h122v55H6Z" fill="#000" />
                <path d="M18 0c-4 32 20 54 44 52 22-2 34-28 29-52M73 0v13h45V0" fill="none" stroke="#fff" />
                <path d="M57 35h19v20H57Z" fill="#eee" />
                <circle cx="72" cy="42" r="8" fill="#f3f3f3" stroke="#444" />
                <path d="m67 37 10 10M77 37 67 47" stroke="#666" />
                <path d="M103 36h23v19h-23Z" fill="#e5e5e5" />
                <text x="103" y="46" fontSize="17" fontWeight="bold" fill="#d7232e" fontFamily="Liberation Sans">A</text>
                <text x="115" y="46" fontSize="10" fontWeight="bold" fill="#d7232e" fontFamily="Liberation Sans">10</text>
              </svg>
              <div className="ml-auto flex w-[24px] flex-col items-center justify-around bg-[#f0eff2]"><Chevron dir="up" /><Chevron /></div>
            </div>
            <div className="flex h-[39px] items-center pl-[6px] pr-[5px] text-[17px]">
              <span className="flex-1">2D Wirefr...</span>
              <Tool name="vsnew" className="w-[36px]" />
              <Tool name="vscopy" className="w-[36px]" />
              <Tool name="vsexp" className="w-[36px]" />
              <Tool name="vsdel" className="w-[36px]" />
            </div>
          </div>
          <div className="flex h-[26px] items-center justify-center pb-[4px]"><Splitter /></div>
          <div className="mx-[14px] flex">
            <div className="mr-[11px] h-[192px] w-[15px] border border-[#a3a2a5] bg-[#efeef1]"><div className="h-[74px] bg-[#a9a8ab]" /></div>
            <div className="flex flex-1 flex-col gap-[6px]">
              <div><GroupHead text="2D Wireframe options" /><Props rows={[["Contour...", "4"], ["Draw tru...", "No"]]} /></div>
              <div><GroupHead text="2D Hide - Obscured Lin..." /><Props rows={[["Color", "ByEntity"], ["Linetype", "Off"]]} /></div>
            </div>
          </div>
        </Palette>
        <Palette title="Sun Properties" className="h-[465px]">
          <div className="ml-[14px] mr-[7px] mt-[10px] flex">
            <div className="mr-[11px] h-[222px] w-[15px] border border-[#a3a2a5] bg-[#efeef1]"><div className="h-[47px] bg-[#a9a8ab]" /></div>
            <div className="flex min-w-0 flex-1 flex-col gap-[6px]">
              <div>
                <GroupHead text="General" />
                <Props
                  wide
                  rows={[
                    ["Status", "Off"],
                    ["Intensity ...", "1.0000"],
                    ["Color", <span className="flex items-center gap-[8px] text-[16px]"><span className="size-[16px] shrink-0 border-2 border-[#222] bg-[#b5a885]" />181,168,133</span>],
                    ["Shadows", "On"],
                  ]}
                />
              </div>
              <div><GroupHead text="Sky Properties" zoom /><Props wide rows={[["Status", "Sky Off"]]} /></div>
            </div>
          </div>
          <div className="flex h-[20px] items-center justify-center"><Splitter /></div>
          <div className="ml-[38px] mr-[5px]">
            <GroupHead text="Geographic Location" zoom />
            <div className="flex h-[136px] overflow-hidden border border-t-0 border-[#a3a2a5]">
              <div className="h-[133px] flex-1 overflow-hidden pl-[6px] pt-[3px] text-[17px] leading-[24px] text-[#111]">
                <p><b>City:</b> *Current*</p>
                <p className="whitespace-nowrap"><b>Time Zone:</b> (GMT-08:00)</p>
                <p>Pacific Time (US &amp;</p>
                <p>Canada); Tijuana</p>
                <p><b>Latitude:</b> 0.0000</p>
                <p className="whitespace-nowrap"><b>Latitude Direction:</b> North</p>
              </div>
              <div className="flex w-[24px] shrink-0 flex-col items-center bg-[#eeedf0] py-[6px]">
                <Chevron dir="up" />
                <div className="mt-[8px] h-[54px] w-full bg-[#cdccce]" />
                <span className="mt-auto"><Chevron /></span>
              </div>
            </div>
          </div>
        </Palette>
      </div>
    </aside>
  );
}

function VBar({ items, className }: { items: string[]; className: string }) {
  return (
    <div className={"flex w-[37px] flex-col border-2 border-[#48474a] bg-[#efeef1] " + className}>
      <div className="flex h-[12px] shrink-0 items-center justify-center bg-[#5a595c]"><span className={"h-[8px] w-[20px] " + dots} /></div>
      {items.map((n) => (
        <Tool key={n} name={n} className="flex-1" />
      ))}
    </div>
  );
}

function Label({ x, y, size, children, middle = false }: { x: number; y: number; size: number; children: string; middle?: boolean }) {
  return (
    <text x={x} y={y} fontSize={size} fontWeight="bold" fill="#fff" textAnchor={middle ? "middle" : "start"}>{children}</text>
  );
}

function Drawing() {
  return (
    <svg className="absolute left-0 top-0 h-[774px] w-[1549px]" viewBox="409 263 1549 774" fontFamily="Liberation Sans" aria-label="Drawing sheet">
      <g fill="none" stroke="#fff" strokeWidth="2" shapeRendering="crispEdges">
        <path d="M779 325H1167V953H779ZM789 336H1158V942H789Z" />
        <path d="M876 325v11M973 325v11M1070 325v11M876 942v11M973 942v11M1070 942v11" />
        <path d="M779 482h10M779 639h10M779 796h10M1158 482h9M1158 639h9M1158 796h9" />
        <path d="M789 801H1158M789 898H1158M1046 801V942M1088 801V898M1046 817h112M1046 833h112M1046 849h112M1046 865h112M1046 882h112M850 898v44M789 921h61" />
      </g>
      <g fill="none" stroke="#e8e8e8" strokeWidth="1" shapeRendering="crispEdges">
        <path d="M955 717H1036M995 675V761" />
        <path d="M991 713h9v9h-9ZM423 1004h14v16h-14ZM430 1004V938M437 1013h61" strokeWidth="2" />
      </g>
      <path d="m498 1007 18 6-18 6ZM498 1010l18 3-18 3M424 938l6-18 6 18ZM427 938l3-18 3 18" fill="none" stroke="#e8e8e8" strokeWidth="1.500" />
      {["4", "3", "2", "1"].map((t, i) => (
        <g key={t}>
          <Label x={828 + i * 97} y={334} size={8} middle>{t}</Label>
          <Label x={828 + i * 97} y={951} size={8} middle>{t}</Label>
        </g>
      ))}
      {["D", "C", "B", "A"].map((t, i) => (
        <g key={t}>
          <Label x={784} y={[418, 564, 721, 878][i]} size={9} middle>{t}</Label>
          <Label x={1163} y={[418, 564, 721, 878][i]} size={9} middle>{t}</Label>
        </g>
      ))}
      <g fontSize="24" fill="#eee" textAnchor="middle" fontFamily="Lato" fontWeight="300">
        <text x="921" y="830">GURU NANAK DEV</text>
        <text x="921" y="859">ENGG. COLLEGE,</text>
        <text x="921" y="888">LUDHIANA</text>
      </g>
      <Label x={1048} y={811} size={8}>NAME</Label>
      <Label x={1048} y={827} size={8}>CLASS</Label>
      <Label x={1048} y={843} size={8}>ROLL NO</Label>
      <Label x={1048} y={861} size={8}>DATE</Label>
      <Label x={1048} y={877} size={8}>GRADE</Label>
      <path d="M1048 886h35v8h-35Z" fill="#fff" />
      <Label x={794} y={912} size={8}>SCALE -</Label>
      <Label x={936} y={923} size={9} middle>TEMPLATE</Label>
      <Label x={1089} y={923} size={9} middle>SHEET NO -</Label>
      <g fontSize="24" fill="#eee" textAnchor="middle" fontFamily="Lato" fontWeight="300">
        <text x="432" y="905">Y</text>
        <text x="537" y="1021">X</text>
      </g>
    </svg>
  );
}

function NavCell({ d }: { d: string }) {
  return (
    <button aria-label="Scroll tabs" className="flex w-[23px] items-center justify-center border-r border-[#a3a2a5]">
      <svg viewBox="0 0 14 14" className="size-[14px]"><path d={d} fill="#6b6a6d" stroke="#6b6a6d" /></svg>
    </button>
  );
}

function Slash() {
  return <svg viewBox="0 0 10 25" className="h-[25px] w-[10px] shrink-0" aria-hidden="true"><path d="M9 0 1 25" stroke="#333" strokeWidth="1.500" /></svg>;
}

function Viewport() {
  return (
    <main className="flex min-w-0 flex-1 flex-col border-2 border-b-white border-l-[#8b8a8d] border-r-white border-t-[#8b8a8d]">
      <div className="flex border-l border-black">
        <div className="relative h-[774px] min-w-0 flex-1 overflow-hidden bg-black"><Drawing /></div>
        <div className="flex w-[26px] flex-col items-center bg-[#f0eff2] py-[8px]">
          <Chevron dir="up" />
          <div className="mt-[431px] h-[27px] w-[22px] bg-[#cdccce]" />
          <span className="mt-auto"><Chevron /></span>
        </div>
      </div>
      <div className="flex h-[26px] items-stretch border-b-2 border-[#111] bg-[#f2f1f4] font-['Liberation_Sans',sans-serif] text-[16px] text-[#111]">
        <NavCell d="M2 1v12M12 1v12L5 7Z" />
        <NavCell d="M11 1v12L4 7Z" />
        <NavCell d="M3 1v12l7-6Z" />
        <NavCell d="M12 1v12M2 1v12l7-6Z" />
        <button className="ml-[-2px] w-[80px] bg-black pl-[2px] text-white [clip-path:polygon(0_0,100%_0,91%_100%,11%_100%)]">Model</button>
        <button className="px-[8px]">Layout1</button>
        <Slash />
        <button className="px-[8px]">Layout2</button>
        <Slash />
        <button className="px-[8px]">Layout3-Layout1</button>
        <Slash />
        <div className="ml-auto flex w-[556px] items-center border-l border-[#b5b4b7] bg-[#f0eff2] pl-[16px] pr-[32px]">
          <Chevron dir="left" />
          <div className="ml-auto mr-[138px] h-full w-[25px] bg-[#cdccce]" />
          <Chevron dir="right" />
        </div>
      </div>
      <div className="flex min-h-[36px] flex-1 items-stretch justify-end bg-[linear-gradient(#98979a,#7d7c7f)] text-[17px]">
        <button className="flex w-[76px] items-center justify-center gap-[3px] border-x border-t-2 border-[#333] bg-[#a5a4a7] font-['Liberation_Sans',sans-serif]"><Icon name="anno" className="size-[24px]" />1:1<Tri /></button>
        <button aria-label="Annotation visibility" className="flex w-[33px] items-center justify-center border-r border-t-2 border-[#333] bg-[#a5a4a7]"><Icon name="annovis" className="size-[24px]" /></button>
        <button aria-label="Add scales" className="mr-[7px] flex w-[33px] items-center justify-center border-r border-t-2 border-[#333] bg-[#a5a4a7]"><Icon name="annoauto" className="size-[24px]" /></button>
        <button aria-label="Status menu" className="flex w-[17px] items-center justify-center border-l border-t-2 border-[#333] bg-[#a5a4a7]"><Tri /></button>
      </div>
    </main>
  );
}

function CommandWindow() {
  return (
    <div className="ml-[3px] flex h-[93px] shrink-0 rounded-l-[5px] bg-[#a3a2a5] font-['Liberation_Mono',monospace] text-[20px] leading-[26px] text-[#111]">
      <div className="w-[23px] pl-[3px] pt-[3px]"><div className={"h-[8px] w-[18px] " + dots} /></div>
      <div className="flex min-w-0 flex-1 flex-col rounded-l-[4px] bg-white">
        <div className="flex h-[63px] border-b-2 border-[#9b9a9d]">
          <pre className="flex-1 pl-[3px] pt-px font-['Liberation_Mono',monospace]">{"Command:  <Switching to: Model>\nRegenerating model - caching viewports."}</pre>
          <div className="flex w-[26px] flex-col items-center justify-between bg-[#f0eff2] py-[7px]"><Chevron dir="up" /><Chevron /></div>
        </div>
        <div className="flex flex-1">
          <label className="flex flex-1 items-center pl-[3px] pt-[5px]">Command:<input aria-label="Command line" className="ml-[12px] flex-1 outline-none" /></label>
          <div className="flex w-[104px] items-center bg-[#f0eff2] pl-[9px] pr-[8px]"><Chevron dir="left" /><div className="ml-[5px] h-full w-[25px] bg-[#cdccce]" /><span className="ml-auto"><Chevron dir="right" /></span></div>
          <div className="w-[25px] border-l border-white bg-[#efeef1]" />
        </div>
      </div>
    </div>
  );
}

const toggles: [string, boolean][] = [["snap", false], ["grid", false], ["ortho", false], ["polar", false], ["osnap", true], ["otrack", true], ["ducs", false], ["dyn", true], ["lwt", false], ["qp", true]];

function StatusBar() {
  const cell = "flex items-center justify-center border-r border-[#4b4a4d] bg-[linear-gradient(#b3b2b5,#9b9a9d)]";
  return (
    <footer className="flex h-[35px] items-stretch border-t-2 border-black bg-[linear-gradient(#959497,#7a797c)] font-['Liberation_Sans',sans-serif] text-[17px] text-[#111]">
      <div className="flex w-[222px] items-center border-r border-[#4b4a4d] pl-[18px] pt-[2px] text-[16px]">85.3350, 43.2179, 0.0000</div>
      {toggles.map(([n, on]) => (
        <button key={n} aria-label={n} aria-pressed={on} className={"flex w-[33px] items-center justify-center border-r border-[#4b4a4d] " + (on ? "bg-[linear-gradient(#dff0f5,#a4d3e0_50%,#bfe3ec)]" : "bg-[#a8a7aa]")}>
          <Icon name={n} className="size-[24px]" />
        </button>
      ))}
      <div className="ml-auto flex items-stretch">
        <button className={cell + " w-[65px] border-l"}>MODEL</button>
        <button aria-label="Model space" className={cell + " w-[33px]"}><Icon name="modelsp" className="size-[24px]" /></button>
        <button aria-label="Layouts" className={cell + " w-[33px]"}><Icon name="qvlay" className="size-[24px]" /></button>
        <div className="w-[19px] bg-[#7c7b7e]" />
        {["pan", "zoom", "wheel", "motion"].map((n) => (
          <button key={n} aria-label={n} className={cell + " w-[33px]"}><Icon name={n} className="size-[25px]" /></button>
        ))}
        <div className="w-[27px] bg-[#7c7b7e]" />
        <button className={cell + " w-[173px] gap-[3px]"}><Icon name="gear" className="size-[24px]" />AutoCAD Classic<Tri /></button>
        <button aria-label="Lock" className={cell + " w-[33px]"}><Icon name="unlock" className="size-[24px]" /></button>
        <button aria-label="Hardware" className="flex w-[54px] items-center justify-center border-r border-[#4b4a4d] bg-[#7a797c]"><span className="flex h-[27px] w-[37px] items-center justify-center border-2 border-[#58575a] bg-[#99989b]"><Icon name="wrench" className="size-[24px]" /></span></button>
        <button aria-label="Status bar menu" className={cell + " w-[17px]"}><Tri /></button>
        <button aria-label="Clean screen" className={cell + " w-[33px]"}><Icon name="clean" className="size-[24px]" /></button>
        <div className="flex w-[25px] items-end justify-end">
          <svg viewBox="0 0 18 20" className="h-[20px] w-[18px]" aria-hidden="true"><path d="M14 2h3v3h-3ZM14 8h3v3h-3ZM8 8h3v3H8ZM14 15h3v3h-3ZM8 15h3v3H8ZM2 15h3v3H2Z" fill="#e6e5e8" /></svg>
        </div>
      </div>
    </footer>
  );
}

const big = "size-[52px] overflow-visible";
const apps: { name: string; cls: string; art: ReactNode }[] = [
  { name: "Start", cls: "w-[74px]", art: <svg viewBox="0 0 48 48" className={big}><path d="M4 7 22 4v18H4ZM24 4 42 1v21H24ZM4 24h18v18L4 39ZM24 24h18v21l-18-3Z" fill="#fff" /></svg> },
  { name: "Internet Explorer", cls: "w-[94px]", art: (
    <svg viewBox="0 0 48 48" className={big}><path d="M37 33C33 44 10 44 10 26 10 8 40 6 40 28H17" fill="none" stroke="#3fb3e8" strokeWidth="8" /><path d="M8 46C-2 38 18 2 38 1c9 0 7 9 4 14 2-6 1-9-3-9C24 8 6 32 8 46Z" fill="#f5c52a" /></svg>) },
  { name: "File Explorer", cls: "ml-[2px] w-[88px] border border-white/40 bg-white/20", art: (
    <svg viewBox="0 0 48 48" className={big}><path d="M3 6h14l3 4h24v28H3Z" fill="#e9d27e" stroke="#b8973a" /><path d="M8 3h10v8H8ZM19 7h12v6H19Z" fill="#fff" /><path d="M9 4h4v4H9Z" fill="#2fa84f" /><path d="M21 8h4v4h-4Z" fill="#c9502a" /><path d="M32 10h9v6h-9Z" fill="#4a9fd8" /><path d="M3 15h42v25H3Z" fill="#f5e6a3" stroke="#cdb35c" /><path d="M9 46V34c0-6 30-6 30 0v12h-7V38H16v8Z" fill="#8fcde9" stroke="#4a96c2" /></svg>) },
  { name: "Photo Gallery", cls: "w-[97px]", art: (
    <svg viewBox="0 0 48 48" className={big}><path d="M6 8h14v26H6Z" fill="#9fc9e8" stroke="#fff" strokeWidth="2" /><path d="M22 22h20v20H22Z" fill="#a9cf8c" stroke="#fff" strokeWidth="2" /><path d="M19 6h25v20H19Z" fill="#6fb1dd" stroke="#fff" strokeWidth="2" /><path d="m28 7 4 4 6-2-1 6 5 4-6 2-1 4-6 2-3 8-6 2-5-4-2-7 5-6 2-8Z" fill="#e4571d" /><circle cx="28" cy="22" r="5" fill="#b93a0a" /><path d="M1 26c-2 14 12 24 28 19-12 0-22-6-24-19Z" fill="#e8b04a" /></svg>) },
  { name: "Movie Maker", cls: "w-[77px]", art: (
    <svg viewBox="0 0 48 48" className={big}><path d="M8 9C14 5 26 4 34 7c-5 11-5 24 0 36-8 4-20 2-28-3C2 30 3 18 8 9Z" fill="#3f7fb8" stroke="#22557f" /><path d="M13 10c5-2 10-2 15-1-2 3-2 6-2 9H11c0-3 1-6 2-8ZM10 21h15v9H11c-1-3-1-6-1-9ZM12 33h14l2 8c-5 1-10 0-14-2Z" fill="#e8691f" /><path d="M44 7c-7 1-9 7-9 16s-1 15-8 21c9-1 12-8 12-17 0-10 1-15 5-20Z" fill="#e7b761" /><path d="m48 30-8 3-8-2v7l8-1 8 1Z" fill="#4d86b5" /></svg>) },
  { name: "Chrome", cls: "ml-[17px] w-[90px] border border-white/40 bg-white/20", art: (
    <svg viewBox="0 0 48 48" className={big}><circle cx="24" cy="24" r="21" fill="#f8d12f" /><path d="M24 24 6 13C14-1 36 0 43 14H24Z" fill="#da3a2f" /><path d="M6 13c-7 14 2 31 16 32l9-17-13-1Z" fill="#3aa757" /><path d="M24 14h19" stroke="#da3a2f" strokeWidth="2" /><circle cx="24" cy="24" r="9.500" fill="#f1f1f1" /><circle cx="24" cy="24" r="7.500" fill="#3c78c8" /></svg>) },
  { name: "Apps", cls: "w-[95px]", art: (
    <svg viewBox="0 0 48 48" className={big}><rect x="4" y="1" width="40" height="45" rx="3" fill="#f5f5f5" stroke="#ccc" /><path d="M12 11h7v6h-7ZM21 11h7v6h-7ZM30 11h6v6h-6Z" fill="#e33b32" /><path d="M12 20h7v6h-7ZM12 29h7v6h-7Z" fill="#1fa160" /><path d="M21 20h7v6h-7Z" fill="#3b82f0" /><path d="M30 20h6v6h-6ZM21 29h7v6h-7ZM30 29h6v6h-6Z" fill="#f2a91e" /></svg>) },
  { name: "VLC", cls: "w-[92px]", art: (
    <svg viewBox="0 0 48 48" className={big}><path d="m10 35 28 0 4 11H6Z" fill="#f0820f" /><path d="M22 2h4l10 34c-4 4-20 4-24 0Z" fill="#ef7d14" /><path d="m20 9 8 0 2 8H18ZM16 24h16l2 8c-5 3-15 3-20 0Z" fill="#f3f3f3" /></svg>) },
  { name: "AutoCAD", cls: "w-[90px] border-2 border-[#f4f0cf] bg-white/40", art: (
    <svg viewBox="0 0 48 48" className={big}><path d="M5 13h39v33H5Z" fill="#ececee" stroke="#bbb" /><path d="m11 1 7 0 12 30-8 3-2-7-4 1-2 7-8-1Z" fill="#c91f35" /><path d="m11 1 2 14-6 19-1 0Z" fill="#8f0f20" /><text x="31" y="24" fontSize="11" fontWeight="bold" fill="#c91f35" fontFamily="Liberation Sans">20</text><text x="32" y="35" fontSize="11" fontWeight="bold" fill="#c91f35" fontFamily="Liberation Sans">10</text></svg>) },
  { name: "PowerPoint", cls: "ml-[3px] w-[89px] border border-white/40 bg-white/20", art: (
    <svg viewBox="0 0 48 48" className={big}><path d="M12 1h31v44H3V10Z" fill="#f6c3a9" stroke="#d2451e" strokeWidth="2.500" /><path d="M8 32 5 43h36l-10-8Z" fill="#fff" /><path d="m24 20 20 5-4 18-22-5Z" fill="#fff" stroke="#eec" /><ellipse cx="33" cy="29" rx="6" ry="5" fill="#e9714a" /><path d="m21 37 12 3M23 34l8 2" stroke="#e38" /><text x="8" y="33" fontSize="34" fontWeight="bold" fill="#cf4a12" fontFamily="Liberation Sans">P</text></svg>) },
];

const tray: ReactNode[] = [
  <><path d="M7 1h5v12l4 3-6 7-7-8h4Z" fill="#fff" stroke="#665" strokeWidth="1" /><circle cx="17" cy="17" r="4" fill="#999" stroke="#fff" strokeWidth="3" /></>,
  <><path d="M4 14c-4-2-2-7 2-6 1-7 11-7 12 0 4 1 4 5 2 7Z" fill="#fff" stroke="#665" strokeWidth="1" /><circle cx="15" cy="16" r="7" fill="#2158c4" stroke="#143a86" /><path d="M11 16c0-5 6-5 7-2M19 17c-1 4-6 4-7 2" stroke="#fff" strokeWidth="1.800" /></>,
  <><path d="m1 10 5-5h13l4 3v7l-5 4H1Z" fill="#c3c4c6" stroke="#777" /><path d="m1 10h17l5-2" stroke="#888" /><path d="m9 15 4 6L23 7" stroke="#3fc23a" strokeWidth="3.500" /></>,
  <><path d="M3 3c9-3 20 4 20 19l-7-1C14 12 10 8 3 3Z" fill="#111" stroke="#111" /><circle cx="9" cy="14" r="5" fill="#ddd" stroke="#333" /><path d="M3 23c2-5 5-7 10-2M10 14l6-6" stroke="#222" strokeWidth="2" /></>,
  <><path d="M2 2h20v18c-5 4-15 4-20-1Z" fill="#1785d2" stroke="#cde" strokeWidth="1" /><path d="M7 5h13v8H7Z" stroke="#fff" /><path d="m10 7 3 4M13 7l-3 4M16 7v4M12 17h8M16 15v5" stroke="#fff" strokeWidth="1.200" /></>,
  <><path d="M1 2h22v14H1Z" fill="#828286" stroke="#222" strokeWidth="1" /><path d="M3 19h7v4H3ZM13 19h7v4h-7Z" fill="#444" stroke="#222" strokeWidth="1" /></>,
  <><path d="M3 1v22" stroke="#fff" strokeWidth="2.500" /><path d="M4 3c6-2 8 4 18 0v10c-8 4-12-2-18 0Z" fill="#fff" stroke="#665" strokeWidth="1" /><circle cx="17" cy="16" r="6.500" fill="#d3262b" stroke="#8e1116" strokeWidth="1" /><path d="m14 13 6 6M20 13l-6 6" stroke="#fff" strokeWidth="2.200" /></>,
  <><path d="M13 4h9v18h-9ZM16 2h3" stroke="#fff" strokeWidth="2.200" /><path d="M15 15h5v5h-5Z" fill="#fff" stroke="none" /><path d="M3 2v5M8 2v5" stroke="#fff" strokeWidth="2" /><path d="M1 7h9v5l-3 2v9H4v-9l-3-2Z" fill="#fff" stroke="#665" strokeWidth="1" /></>,
  <><path d="M2 18h3v4H2ZM7 15h3v7H7ZM12 11h3v11h-3Z" fill="#fff" stroke="#555" strokeWidth="1" /><path d="M17 3h5v19h-5Z" fill="#7a6a38" stroke="#555" strokeWidth="1" /><path d="m16 9 8 14H9Z" fill="#f6c11b" stroke="#c48a06" strokeWidth="1" /><path d="M16.500 13v5M16.500 20v2" stroke="#222" strokeWidth="2" /></>,
  <><path d="M1 8h4l6-6v20l-6-6H1Z" fill="#fff" stroke="#665" strokeWidth="1" /><path d="M14 8c2 3 2 5 0 8M17 5c4 5 4 9 0 14M20 3c5 6 5 12 0 18" stroke="#fff" strokeWidth="1.600" /></>,
];

function Taskbar() {
  return (
    <div className="relative ml-px flex h-[64px] items-stretch overflow-hidden bg-[linear-gradient(90deg,#554a31_0,#60522f_407px,#b9a24a_408px,#c2a741_560px,#bba43f_820px,#c1b16b_1130px,#c0ad4c_1300px,#bda340_1500px,#c2a03b_1750px,#b8953a_100%)]">
      <svg viewBox="0 0 320 64" className="absolute left-[820px] top-0 h-[64px] w-[320px]" aria-hidden="true">
        <defs>
          <linearGradient id="shade" x1="0" x2="1" y1="0" y2="0">
            <stop offset="0" stopColor="#5b5533" />
            <stop offset="1" stopColor="#675236" />
          </linearGradient>
        </defs>
        <path d="M4 0h295c6 12 5 22 10 34l6 30H10Z" fill="url(#shade)" />
        <path d="M294 0h14c2 10 8 14 4 24l-3 3C304 16 304 10 294 0Z" fill="#bd9230" />
        <path d="M163 52c4 2 6 6 8 12h-9Z" fill="#b9aa62" />
      </svg>
      <div className="relative flex items-stretch">
        {apps.map((a) => (
          <button key={a.name} aria-label={a.name} className={"flex items-center justify-center " + a.cls}>{a.art}</button>
        ))}
      </div>
      <div className="relative ml-auto flex items-center">
        {tray.map((t, i) => (
          <button key={i} aria-label="Tray item" className="flex w-[36px] justify-center"><Svg className="size-[25px]">{t}</Svg></button>
        ))}
        <div className="ml-[10px] w-[48px] pt-[3px] text-center text-[17px] leading-[28px] text-white">ENG<br />US</div>
        <div className="mr-[25px] w-[94px] pt-[3px] text-right text-[17px] leading-[28px] text-white">11:48 AM<br />4/15/2015</div>
      </div>
    </div>
  );
}

export default function App() {
  return (
    <div className="min-h-screen bg-white pt-[85px] font-['Open_Sans','Noto_Sans',sans-serif]">
      <div className="relative border-t border-[#d5d5d7] bg-[#ebebec] pb-[13px] pl-[16px] pr-[13px]">
        <div className="absolute left-0 top-[8px] h-[22px] w-[4px] bg-[#e8844c]" />
        <div className="absolute left-0 top-[40px] h-[37px] w-[4px] bg-[#d9582b]" />
        <div className="bg-[#69686b]">
          <Header />
          <Toolbars />
          <div className="mt-[7px] flex h-[943px]">
            <LeftDock />
            <div className="flex min-w-0 flex-1 flex-col pl-[2px]">
              <div className="mb-[7px] flex min-h-0 flex-1">
                <VBar className="ml-[3px] h-[684px] shrink-0" items={["line", "xline", "pline", "polygon", "rect", "arc", "circle", "cloud", "spline", "ellipse", "elarc", "insert", "mkblock", "point", "hatch", "gradient", "region", "table", "mtext"]} />
                <div className="ml-[7px] flex min-w-0 flex-1"><Viewport /></div>
                <div className="ml-[6px] mr-[6px] flex shrink-0 flex-col gap-[2px]">
                  <VBar className="h-[613px]" items={["erase", "cpobj", "mirror", "offset", "array", "move", "rotate", "scale", "stretch", "trim", "extend", "brkpt", "brk", "join", "chamfer", "fillet", "explode"]} />
                  <VBar className="h-[157px]" items={["front", "back", "above", "under"]} />
                </div>
              </div>
              <CommandWindow />
            </div>
          </div>
          <StatusBar />
        </div>
      </div>
      <Taskbar />
    </div>
  );
}
